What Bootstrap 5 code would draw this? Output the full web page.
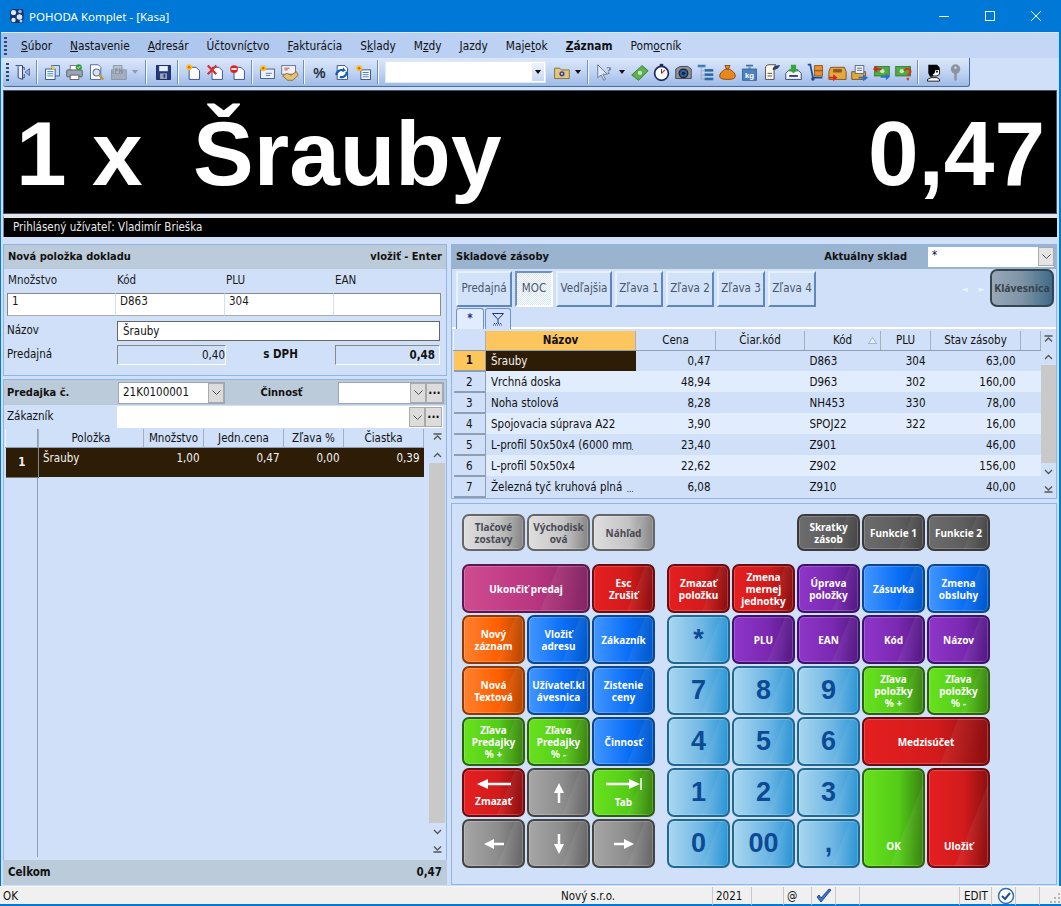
<!DOCTYPE html>
<html lang="sk">
<head>
<meta charset="UTF-8">
<title>POHODA Komplet - [Kasa]</title>
<link href="https://cdn.jsdelivr.net/npm/bootstrap@5.3.0/dist/css/bootstrap.min.css" rel="stylesheet">
<style>
body{margin:0;background:#0078d7;font:11.5px/1.2 "DejaVu Sans Condensed","Noto Sans","Liberation Sans",sans-serif;color:#111;overflow:hidden}
.app-win{width:1061px;height:906px;padding:0 2px 2px 1px;background:#0078d7}
.title-bar{height:32px;color:#fff;font:11.5px "Noto Sans",sans-serif;padding-left:8px}
.title-bar svg{display:block}
.win-btn{width:46px;height:32px}
.app-body{height:872px;background:#cfe0f8}
.menu-bar{height:26px;padding:1px 0 0 3px;font-size:11.8px;background:linear-gradient(90deg,#a5c0ea,#c4d7f6 60%);border-top:1px solid #dfe9f8}
.grip{width:3px;height:18px;background:repeating-linear-gradient(#2b4a78 0 2px,transparent 2px 4px);flex:none}
.menu-item{padding:0 9px;color:#111}
.menu-bar .grip{margin-right:5px}
.tool-row{height:30px;padding-left:2px}
.tool-bar{width:967px;height:29px;padding-left:3px;background:linear-gradient(#dbe7fb,#c4d6f4 45%,#9dbae6);border-right:1px solid #4a6c9c;border-bottom:1px solid #4a6c9c;border-radius:0 0 3px 3px}
.tool-bar .grip{margin-right:2px}
.tbtn{width:22px;height:22px;flex:none;display:flex;align-items:center;justify-content:center}
.tbtn svg{display:block;width:19px;height:19px}
.tcaret{width:0;height:0;border:3px solid transparent;border-top:4px solid #111;border-bottom:0;margin:0 3px;flex:none}
.tcaret.off{border-top-color:#8b9bb2}
.tsep{width:2px;height:24px;margin:0 3px;background:linear-gradient(90deg,#6f8fbd 50%,#f4f8ff 50%);flex:none}
.gap-l2{margin-left:2px}
.tcombo{width:161px;height:22px;background:#fff;margin-left:3px;flex:none;border:1px solid #dfe9f8}
.tcombo-btn{width:14px;height:20px;margin-left:auto;background:linear-gradient(#eef3fb,#c8d8f2);border:1px solid #fff}
.tcombo-btn .tcaret{margin:0}
.big-display{height:124px;margin:2px 2px 0;background:#000;color:#fff;border:1px solid #44536a;padding:2px 11px 0 12px;font:700 91px/1 "Liberation Sans",Arial,sans-serif;white-space:pre}
.user-bar{height:23px;margin:0 2px;padding-left:9px;background:#000;color:#e9e9e9;line-height:19px;border-left:1px solid #888;border-top:4px solid #e2e6ec}
.work-area{display:grid;grid-template-columns:444px 606px;column-gap:4px;padding:7px 0 0 2px;height:649px}
.col-left,.col-right{display:flex;flex-direction:column;height:641px}
.pane{border:1px solid #8fb4e6;background:#cfe0f8}
.pane-head{background:#bccbd9;font-weight:700;font-size:11px;padding:0 4px;color:#111}
.item-pane{height:132px;margin-bottom:3px}
.item-pane .pane-head{height:24px}
.item-grid{display:grid;grid-template-columns:109px 109px 109px 107px;margin:0 5px 0 3px;padding-top:4px;color:#1a1a1a}
.item-lbl{height:20px;padding:1px 0 0 1px}
.item-cell{height:23px;background:#fff;border-top:1px solid #888;border-bottom:1px solid #aaa;padding:1px 4px;border-right:1px solid #cfe0f8}
.item-cell.cell-first{border-left:1px solid #888}
.item-cell.cell-last{border-right:1px solid #888}
.item-row2{display:grid;grid-template-columns:110px 323px;margin:5px 0 0 3px;align-items:center}
.name-box{height:20px;background:#fff;border:1px solid #666;padding:1px 5px;line-height:16px}
.item-row3{display:grid;grid-template-columns:110px 109px 109px 105px;margin:4px 0 0 3px;align-items:center}
.ro-box{height:20px;border-top:1px solid #888;border-left:1px solid #888;border-bottom:1px solid #fff;border-right:1px solid #fff;text-align:right;line-height:18px}
.doc-pane{flex:1;display:flex;flex-direction:column}
.doc-head{height:25px;padding:0;display:grid;grid-template-columns:114px 107px 113px 106px;align-items:center}
.doc-head b{padding-left:3px}
.combo-box{height:22px;background:#fff;border:1px solid #9aa7b5;display:flex;align-items:center;padding-left:4px;font-weight:400;font-size:11.5px}
.combo-arrow{width:16px;height:20px;margin-left:auto;background:#dcdcdc;border:1px solid #aaa;flex:none;display:flex;align-items:center;justify-content:center}
.combo-dots{width:17px;height:20px;background:#dcdcdc;border:1px solid #aaa;flex:none;text-align:center;font-weight:700;line-height:12px;font-size:12px}
.cust-row{height:24px;display:grid;grid-template-columns:110px 326px;align-items:center;padding-left:3px}
.cust-row .combo-box{height:22px;border-color:#fff}
.doc-table-wrap{flex:1;display:flex;padding:0 2px 0 1px;min-height:0}
.doc-grid{flex:1;position:relative;background:#cfe0f8}
.line-v{position:absolute;left:32px;top:0;bottom:0;width:1px;background:#8d9fb5}
.tb-grid{table-layout:fixed;margin:0;border-collapse:collapse;position:relative;font-size:inherit}
.tb-doc{width:418px}
.tb-grid th,.tb-grid td{padding:0 4px;background:transparent;color:#111;border:0;white-space:nowrap;overflow:hidden;box-shadow:none}
.tb-grid th{height:18px;font-weight:400;text-align:center;border-right:1px solid #a4b0bf;border-bottom:1px solid #8d9fb5;border-left:1px solid #eef4fd;vertical-align:middle;line-height:16px}
.tb-grid .num{text-align:right}
.doc-row td{height:30px;background:#2e1d06;color:#f2f2f2;vertical-align:top;padding-top:2px;line-height:16px}
.doc-row td.rhead{font-weight:700;text-align:center;vertical-align:middle;border-right:1px solid #888;border-bottom:1px solid #777;padding:0}
.sbar{width:16px;flex:none;display:flex;flex-direction:column;background:#cfe0f8;margin-left:5px}
.sbtn{height:17px;flex:none;display:flex;align-items:center;justify-content:center}
.strack{flex:1;background:#c9c9c9}
.total-bar{height:25px;background:#bccbd9;font-weight:700;padding:0 5px;margin:3px -1px -1px}
.stock-pane{height:255px;margin-bottom:4px}
.stock-head{height:24px;background:#9ab3cf;font-weight:700;font-size:11px;padding:0 2px 0 4px}
.stock-head .combo-box{width:126px;height:20px;margin-left:21px;border:0;align-items:flex-start;padding-top:2px}
.stock-head .combo-arrow{height:19px;background:#e4e4e4;margin-top:-2px}
.price-row{height:37px;padding-left:4px;margin-top:2px}
.price-btn{height:36px;background:#d2e2f9;border:2px solid;border-color:#e7f0fd #5f86bd #5f86bd #e7f0fd;display:flex;align-items:center;justify-content:center;color:#47566b;margin-right:3px;flex:none}
.price-btn.on{background:repeating-conic-gradient(#fff 0 25%,#d7e5fa 0 50%) 0 0/2px 2px;border-color:#6f93c6 #fff #fff #6f93c6}
.w56{width:56px}.w38{width:38px}.w48{width:48px}
.kbd-toggle{width:64px;height:38px;margin:-2px 2px 0 0;border:2px solid #34464f;border-radius:7px;background:linear-gradient(90deg,#97a8b8,#7f94a6 50%,#3f6b88);color:#38424c;font:700 10.5px "Noto Sans",sans-serif;display:flex;align-items:center;justify-content:center;flex:none}
.pager-mark{color:#e9f1fd;font-size:9px;width:17px;text-align:center;flex:none}
.mini-tabs{height:21px;padding-left:4px;border-bottom:2px solid #fff}
.mini-tab{width:28px;height:21px;border:1px solid #6f93c6;border-bottom:0;border-radius:3px 3px 0 0;background:#e1ecfc;display:flex;align-items:center;justify-content:center;color:#1e2f86;font-weight:700}
.mini-tab.alt{width:26px;background:#cfe0f8;margin-left:1px}
.stock-wrap{display:flex;padding:2px 2px 0 1px}
.stock-tb{width:587px;flex:none;align-self:flex-start}
.stock-tb td{height:21px;line-height:18px;padding:0 5px;vertical-align:middle}
.stock-tb tr:nth-child(even) td{background:#e1ecfc}
.stock-tb tr:nth-child(odd) td{background:#cfe0f8}
.stock-tb td.rhead{background:#cfe0f8!important;text-align:center;border-right:1px solid #8d9fb5;border-bottom:2px solid #8d9fb5;padding:0}
.stock-tb tr td.sel-head{background:#ffc65c!important;font-weight:700}
.stock-tb tr td.sel-name{background:#2e1d06!important;color:#f2f2f2}
.stock-tb th{height:19px}
.stock-tb th.sel-col{background:#fdc55e;font-weight:700}
.stock-tb th.sort-col{position:relative}
.sort-mark{position:absolute;right:3px;top:6px;display:block}
.dots-cut{position:relative}
.dots-cut::after{content:"...";position:absolute;right:2px;bottom:3px;font-size:8px;line-height:8px;color:#111}
.stock-wrap .sbar{height:166px;margin-left:0;width:15px}
.c32{width:32px}.c33{width:33px}.c105{width:105px}.c60{width:60px}.c80{width:80px}.c150{width:150px}.c89{width:89px}.c76{width:76px}.c50{width:50px}.c90{width:90px}.c20{width:20px}
.pad-pane{flex:1;padding:10px 0 0 10px}
.pad-grid{display:grid;grid-template-columns:repeat(3,63px) 8px repeat(5,63px);grid-template-rows:37px 9px repeat(6,49px);gap:2px;width:530px}
.pad{display:flex;flex-direction:column;align-items:center;justify-content:center;text-align:center;border:2px solid var(--b);border-radius:7px;color:#fff;font:700 10px/12px "Noto Sans","Liberation Sans",sans-serif;overflow:hidden;box-shadow:inset 0 0 0 1px rgba(255,255,255,.2);background:linear-gradient(112deg,transparent 66%,rgba(255,255,255,.06) 66.5%,transparent 90%),linear-gradient(90deg,var(--c1),var(--c2) 58%,var(--c3))}
.pad svg{display:block}
.k-silver{--b:#666;--c1:#dedede;--c2:#c4c4c4;--c3:#858585;color:#4a4a55}
.k-dark{--b:#3a3a3a;--c1:#6c6c6c;--c2:#5e5e5e;--c3:#474747}
.k-pink{--b:#5b1850;--c1:#cf4c92;--c2:#b8357f;--c3:#842664}
.k-red{--b:#6c0c10;--c1:#e51f20;--c2:#d31b1c;--c3:#8d0f10}
.k-blue{--b:#0b468e;--c1:#4297ff;--c2:#0a6ef7;--c3:#0059cb}
.k-orange{--b:#8c3a02;--c1:#ff812f;--c2:#ff5f00;--c3:#b64600}
.k-green{--b:#2d6010;--c1:#67e21d;--c2:#54cc18;--c3:#3b8410}
.k-gray{--b:#444;--c1:#a6a6a6;--c2:#8c8c8c;--c3:#676767}
.k-purple{--b:#3c1170;--c1:#8f36c9;--c2:#7a28b1;--c3:#551a84}
.k-sky{--b:#1f6892;--c1:#a8d6ef;--c2:#6db6e4;--c3:#2a95d5;color:#0c4a94;font:700 27px/1 "Liberation Sans",Arial,sans-serif}
.k-ok{justify-content:flex-end;padding-bottom:14px}
.k-arrow{gap:6px}
.pad-wide2{grid-column:span 2}
.pad-tall2{grid-row:span 2}
.status-bar{height:18px;background:#f0f0f0;display:grid;grid-template-columns:558px 155px 39px 32px 28px 24px 24px 100px 32px 24px 24px 21px;border-top:1px solid #f8f8f8;margin:0 -2px 0 -1px}
.status-bar>div{border-right:1px solid #c8c8c8;padding:0 3px;line-height:17px;white-space:nowrap;display:flex;align-items:center}
.status-bar>div.no-sep{border:0}
.status-bar>div.cell-c{justify-content:center;padding:0}
.status-bar>div:last-child{border:0;padding:0;justify-content:flex-end}
</style>
</head>
<body>
<div class="app-win d-flex flex-column">
  <div class="title-bar d-flex align-items-center">
    <svg width="16" height="16" viewBox="0 0 16 16" class="me-1"><path d="M1 3l3-2h10l1 5-1 9H3L1 12z" fill="#16356f"/><circle cx="4.500" cy="4.500" r="2.600" fill="#dce9fb"/><circle cx="11" cy="3.500" r="1.800" fill="#8fb7ee"/><circle cx="10.500" cy="9" r="2.800" fill="#dce9fb"/><circle cx="4.500" cy="12" r="2.200" fill="#dce9fb"/><circle cx="12" cy="13" r="1.500" fill="#b6d0f3"/></svg>
    <span>POHODA Komplet - [Kasa]</span>
    <div class="ms-auto d-flex">
      <div class="win-btn d-flex align-items-center justify-content-center"><svg width="10" height="10" viewBox="0 0 10 10"><path d="M0 5.500h10" stroke="#fff" fill="none"/></svg></div>
      <div class="win-btn d-flex align-items-center justify-content-center"><svg width="10" height="10" viewBox="0 0 10 10"><rect x=".5" y=".5" width="9" height="9" stroke="#fff" fill="none"/></svg></div>
      <div class="win-btn d-flex align-items-center justify-content-center"><svg width="10" height="10" viewBox="0 0 10 10"><path d="M0 0l10 10M10 0L0 10" stroke="#fff" fill="none"/></svg></div>
    </div>
  </div>
  <div class="app-body d-flex flex-column">
    <div class="menu-bar d-flex align-items-center">
      <div class="grip"></div>
      <span class="menu-item"><u>S</u>úbor</span><span class="menu-item"><u>N</u>astavenie</span><span class="menu-item"><u>A</u>dresár</span><span class="menu-item">Účtovní<u>c</u>tvo</span><span class="menu-item"><u>F</u>akturácia</span><span class="menu-item">S<u>k</u>lady</span><span class="menu-item">M<u>z</u>dy</span><span class="menu-item"><u>J</u>azdy</span><span class="menu-item">Maje<u>t</u>ok</span><span class="menu-item fw-bold"><u>Z</u>áznam</span><span class="menu-item">Pom<u>o</u>cník</span>
    </div>
    <div class="tool-row">
      <div class="tool-bar d-flex align-items-center">
        <div class="grip"></div>
        <!-- door -->
        <div class="tbtn"><svg viewBox="0 0 22 22"><path d="M3 3h8v16l-5-2V4M11 5h2v3M11 17h2v-4" fill="#e7eefb" stroke="#17306e"/><path d="M14 10.500l5-4v8z" fill="#9fb6dc" stroke="#17306e" stroke-width=".7"/></svg></div>
        <div class="tsep"></div>
        <!-- docs -->
        <div class="tbtn"><svg viewBox="0 0 22 22"><rect x="10" y="3" width="9" height="12" fill="#c9d9f3" stroke="#2b5f9e"/><rect x="3" y="7" width="11" height="12" fill="#fff" stroke="#1f4a86"/><path d="M5 10h7M5 12.500h7M5 15h7" stroke="#2b6fb5"/><path d="M9 5l2-2 3 3-2 2z" fill="#f4c930"/></svg></div>
        <!-- printer -->
        <div class="tbtn"><svg viewBox="0 0 22 22"><rect x="6" y="3" width="10" height="6" fill="#fff" stroke="#666"/><rect x="2" y="8" width="18" height="8" rx="1" fill="#9aa6b8" stroke="#555"/><rect x="6" y="14" width="10" height="5" fill="#fff" stroke="#555"/><circle cx="16" cy="5" r="3.500" fill="#2f9c3d"/><path d="M14.500 5l1 1.200 2-2.400" stroke="#fff" fill="none"/></svg></div>
        <!-- preview -->
        <div class="tbtn"><svg viewBox="0 0 22 22"><path d="M4 2h9l3 3v14H4z" fill="#fff" stroke="#3c5c8e"/><circle cx="11" cy="11" r="4" fill="#d4e4f8" stroke="#66758c" stroke-width="1.200"/><path d="M14 14l5 5" stroke="#c9962c" stroke-width="2.500"/></svg></div>
        <!-- fax off -->
        <div class="tbtn"><svg viewBox="0 0 22 22"><rect x="3" y="8" width="17" height="11" fill="#a3adbd" stroke="#8a94a4"/><rect x="5" y="3" width="10" height="9" fill="#b7c1d0" stroke="#8a94a4"/><text x="6.500" y="11" font-size="7" font-weight="700" fill="#7e8898">FN</text></svg></div>
        <div class="tcaret off"></div>
        <div class="tsep ms-1"></div>
        <!-- save -->
        <div class="tbtn gap-l2"><svg viewBox="0 0 22 22"><rect x="3" y="3" width="16" height="16" fill="#23397e" stroke="#131f50"/><rect x="6" y="3.500" width="10" height="6" fill="#e8eefa"/><rect x="7" y="12" width="8" height="6.500" fill="#9aa4b8"/><rect x="11" y="13" width="2" height="4" fill="#23397e"/></svg></div>
        <div class="tsep"></div>
        <!-- new -->
        <div class="tbtn"><svg viewBox="0 0 22 22"><path d="M6 5h8l4 4v10H6z" fill="#fff" stroke="#26407a"/><circle cx="6" cy="5" r="3.500" fill="#f6c22a"/><circle cx="6" cy="5" r="1.500" fill="#e8631a"/></svg></div>
        <!-- delete -->
        <div class="tbtn"><svg viewBox="0 0 22 22"><path d="M7 5h8l4 4v10H7z" fill="#fff" stroke="#26407a"/><path d="M2 3l10 10M12 3L2 13" stroke="#e02a2a" stroke-width="2.500"/></svg></div>
        <!-- stop -->
        <div class="tbtn"><svg viewBox="0 0 22 22"><path d="M7 5h8l4 4v10H7z" fill="#fff" stroke="#26407a"/><circle cx="7" cy="7" r="4.500" fill="#d8261f"/><rect x="4" y="6" width="6" height="2" fill="#fff"/></svg></div>
        <div class="tsep"></div>
        <!-- new mail -->
        <div class="tbtn"><svg viewBox="0 0 22 22"><rect x="3" y="7" width="16" height="11" fill="#eef0f4" stroke="#39517c"/><path d="M9 12h7M9 14.500h5" stroke="#3b6fc4"/><circle cx="6" cy="6" r="3.500" fill="#f6c22a"/><circle cx="6" cy="6" r="1.500" fill="#e8631a"/></svg></div>
        <!-- handshake -->
        <div class="tbtn"><svg viewBox="0 0 22 22"><rect x="2" y="3" width="16" height="10" fill="#eef0f4" stroke="#5b6c86"/><path d="M5 6h6M5 8h4" stroke="#b6403d"/><path d="M3 15l5-3 5 2 6-4 2 4-6 6H9z" fill="#e3c178" stroke="#8f6a22"/></svg></div>
        <div class="tsep"></div>
        <div class="tbtn"><svg viewBox="0 0 22 22"><text x="11" y="17" text-anchor="middle" font-size="16" font-weight="700" font-family="Liberation Sans" fill="#242c38">%</text></svg></div>
        <!-- refresh -->
        <div class="tbtn"><svg viewBox="0 0 22 22"><path d="M6 3h9l3 3v13H6z" fill="#fff" stroke="#26407a"/><path d="M5 14a6 6 0 0 1 9-5" stroke="#0d5cc0" stroke-width="2.500" fill="none"/><path d="M17 10a6 6 0 0 1-8 6" stroke="#0d5cc0" stroke-width="2.500" fill="none"/><path d="M13 5l3 4-4 1z" fill="#0d5cc0"/></svg></div>
        <!-- new list -->
        <div class="tbtn"><svg viewBox="0 0 22 22"><rect x="8" y="8" width="11" height="11" fill="#fff" stroke="#26407a"/><path d="M10 11h7M10 13.500h7M10 16h7" stroke="#2b6fb5"/><circle cx="6" cy="6" r="3.500" fill="#f6c22a"/><circle cx="6" cy="6" r="1.500" fill="#e8631a"/></svg></div>
        <div class="tsep"></div>
        <div class="tcombo d-flex"><div class="tcombo-btn d-flex align-items-center justify-content-center"><div class="tcaret"></div></div></div>
        <!-- folder -->
        <div class="tbtn ms-1"><svg viewBox="0 0 22 22"><path d="M3 6h6l2 2h9v10H3z" fill="#e2c67a" stroke="#7d6a2c"/><circle cx="11.500" cy="12.500" r="3" fill="#3d3ab0"/><circle cx="11.500" cy="12.500" r="1.200" fill="#f6e36a"/></svg></div>
        <div class="tcaret"></div>
        <div class="tsep"></div>
        <!-- help -->
        <div class="tbtn gap-l2"><svg viewBox="0 0 22 22"><path d="M2 2v15l4-3 3 6 2-1-3-6h5z" fill="#dfe8f6" stroke="#5f6f88"/><text x="15" y="13" text-anchor="middle" font-size="12" font-weight="700" font-family="Liberation Serif" fill="#5f6f88">?</text></svg></div>
        <div class="tcaret"></div>
        <!-- money -->
        <div class="tbtn"><svg viewBox="0 0 22 22"><path d="M2 14L14 3l7 6-11 11z" fill="#5fb04e" stroke="#2e7a2c"/><circle cx="11.500" cy="11.500" r="2.500" fill="#c4ecb6"/></svg></div>
        <!-- timer -->
        <div class="tbtn"><svg viewBox="0 0 22 22"><rect x="9" y="1" width="4" height="3" fill="#1c2a5c"/><circle cx="11" cy="12" r="8" fill="#fff" stroke="#1c2a5c" stroke-width="2"/><path d="M11 12l4-4" stroke="#d9302a" stroke-width="1.500"/><path d="M11 12V7" stroke="#1c2a5c"/></svg></div>
        <!-- camera -->
        <div class="tbtn"><svg viewBox="0 0 22 22"><path d="M2 7l5-3h9l4 3v11H2z" fill="#8c919a" stroke="#3c4048"/><circle cx="11" cy="12" r="5" fill="#2d5ea8" stroke="#23262c" stroke-width="1.500"/><circle cx="11" cy="12" r="2" fill="#11233f"/></svg></div>
        <!-- tree -->
        <div class="tbtn"><svg viewBox="0 0 22 22"><rect x="2" y="2" width="9" height="3" fill="#3f7eb8"/><path d="M6 5v14M6 9h4M6 14h4M6 18.500h4" stroke="#9aa8bb"/><rect x="10" y="7" width="10" height="3" fill="#2f6aa5"/><rect x="10" y="12" width="10" height="3" fill="#2f6aa5"/><rect x="10" y="17" width="10" height="3" fill="#2f6aa5"/></svg></div>
        <!-- bag -->
        <div class="tbtn"><svg viewBox="0 0 22 22"><path d="M8 3h6l-2 4h-2z" fill="#e89a28" stroke="#7a3d06"/><path d="M9 7h4c4 2 7 5 7 8 0 3-3 4-9 4s-9-1-9-4c0-3 3-6 7-8z" fill="#e8871e" stroke="#7a3d06"/></svg></div>
        <!-- kg -->
        <div class="tbtn"><svg viewBox="0 0 22 22"><rect x="7" y="2" width="8" height="2" fill="#3a6ea8"/><rect x="9.500" y="4" width="3" height="3" fill="#7ba3cf"/><rect x="3" y="7" width="16" height="13" fill="#4f82ba" stroke="#2d5d96"/><text x="11" y="17" text-anchor="middle" font-size="9" font-weight="700" font-family="Liberation Sans" fill="#fff">kg</text></svg></div>
        <!-- paper -->
        <div class="tbtn"><svg viewBox="0 0 22 22"><path d="M4 6c0-3 2-4 4-4h8c-2 1-2 3-2 5v12H4z" fill="#fbf7e4" stroke="#3a3f4e"/><path d="M6.500 12h5M6.500 15h5" stroke="#3a3f4e"/><path d="M12 7c2-3 5-5 9-4-2 3-4 5-8 5z" fill="#2c3e66"/></svg></div>
        <!-- inbox -->
        <div class="tbtn"><svg viewBox="0 0 22 22"><path d="M2 12l3-3h12l3 3v7H2z" fill="#f2f4f8" stroke="#25355f"/><rect x="6" y="14" width="10" height="2" fill="#25355f"/><path d="M8 2h6v5h3l-6 5-6-5h3z" fill="#38a53c"/></svg></div>
        <!-- cart -->
        <div class="tbtn"><svg viewBox="0 0 22 22"><path d="M2 2h3l3 15h11" stroke="#1e4a8e" stroke-width="2" fill="none"/><circle cx="8" cy="18.500" r="2" fill="#1e4a8e"/><rect x="10" y="3" width="9" height="6" fill="#e9902e" stroke="#8a5210"/><rect x="10" y="9" width="9" height="6" fill="#e9902e" stroke="#8a5210"/></svg></div>
        <!-- box in -->
        <div class="tbtn"><svg viewBox="0 0 22 22"><path d="M3 5h16l2 5v9H1v-9z" fill="#e4a83e" stroke="#7b4c10"/><rect x="6" y="7" width="10" height="4" fill="#8a5a18"/><path d="M1 16h5v-3l5 4-5 4v-3H1z" fill="#d8261f"/></svg></div>
        <!-- box out -->
        <div class="tbtn"><svg viewBox="0 0 22 22"><path d="M2 10h16v9H2z" fill="#e4a83e" stroke="#7b4c10"/><rect x="6" y="3" width="10" height="9" fill="#f2f4f8" stroke="#4a5e80"/><path d="M8 6h6M8 8.500h6" stroke="#4a5e80"/><path d="M10 16h5v-3l6 4-6 4v-3h-5z" fill="#2a6fd0"/></svg></div>
        <!-- money arrows -->
        <div class="tbtn"><svg viewBox="0 0 22 22"><rect x="3" y="4" width="17" height="11" fill="#55a848" stroke="#2e7a2c"/><circle cx="12" cy="9.500" r="2.500" fill="#c4ecb6"/><path d="M11 6H6V3L1 7l5 4V8h5z" fill="#d8261f"/><path d="M10 15h6v-3l5 4-5 4v-3h-6z" fill="#2a6fd0"/></svg></div>
        <!-- money question -->
        <div class="tbtn"><svg viewBox="0 0 22 22"><rect x="2" y="4" width="17" height="11" fill="#55a848" stroke="#2e7a2c"/><circle cx="9" cy="9.500" r="2.500" fill="#c4ecb6"/><path d="M12 9c1-3 7-3 7 1 0 3-3 3-3 5M16 17v3" stroke="#d0391a" stroke-width="2.500" fill="none"/></svg></div>
        <div class="tsep"></div>
        <!-- head -->
        <div class="tbtn"><svg viewBox="0 0 22 22"><path d="M13 7h5v6l-3 2h-5v-3l2-1z" fill="#fff" stroke="#000"/><path d="M5 2h10l3 3v3h-5l-1 4-2 1v3H7l-2-4z" fill="#000"/><rect x="14" y="9" width="2" height="2" fill="#000"/><path d="M4 21v-2l4-2h7l3 2v2z" fill="#fff" stroke="#000"/></svg></div>
        <!-- key -->
        <div class="tbtn"><svg viewBox="0 0 22 22"><circle cx="11" cy="7" r="5.500" fill="#8f959d"/><circle cx="11" cy="5.500" r="1.500" fill="#c3d3ec"/><path d="M9.500 11h3v8l-1.500 2-1.500-2z" fill="#8f959d"/></svg></div>
      </div>
    </div>

    <div class="big-display d-flex justify-content-between align-items-center"><span>1 x  Šrauby</span><span>0,47</span></div>
    <div class="user-bar">Prihlásený užívateľ: Vladimír Brieška</div>

    <div class="work-area">
      <div class="col-left">
        <div class="pane item-pane">
          <div class="pane-head d-flex justify-content-between align-items-center"><span>Nová položka dokladu</span><span>vložiť - Enter</span></div>
          <div class="item-grid">
            <div class="item-lbl">Množstvo</div><div class="item-lbl">Kód</div><div class="item-lbl">PLU</div><div class="item-lbl">EAN</div>
            <div class="item-cell cell-first">1</div><div class="item-cell">D863</div><div class="item-cell">304</div><div class="item-cell cell-last"></div>
          </div>
          <div class="item-row2"><span>Názov</span><div class="name-box">Šrauby</div></div>
          <div class="item-row3"><span>Predajná</span><div class="ro-box">0,40</div><div class="text-center fw-bold">s DPH</div><div class="ro-box fw-bold pe-1">0,48</div></div>
        </div>
        <div class="pane doc-pane">
          <div class="pane-head doc-head">
            <b>Predajka č.</b>
            <div class="combo-box">21K0100001<div class="combo-arrow"><svg width="9" height="5" viewBox="0 0 9 5"><path d="M.5.500l4 4 4-4" stroke="#555" fill="none"/></svg></div></div>
            <div class="text-center fw-bold">Činnosť</div>
            <div class="combo-box"><div class="combo-arrow"><svg width="9" height="5" viewBox="0 0 9 5"><path d="M.5.500l4 4 4-4" stroke="#555" fill="none"/></svg></div><div class="combo-dots">...</div></div>
          </div>
          <div class="cust-row"><span>Zákazník</span><div class="combo-box"><div class="combo-arrow"><svg width="9" height="5" viewBox="0 0 9 5"><path d="M.5.500l4 4 4-4" stroke="#555" fill="none"/></svg></div><div class="combo-dots">...</div></div></div>
          <div class="doc-table-wrap">
            <div class="doc-grid">
              <div class="line-v"></div>
              <table class="table tb-grid tb-doc">
                <colgroup><col class="c33"><col class="c105"><col class="c60"><col class="c80"><col class="c60"><col class="c80"></colgroup>
                <thead><tr><th></th><th>Položka</th><th>Množstvo</th><th>Jedn.cena</th><th>Zľava %</th><th>Čiastka</th></tr></thead>
                <tbody><tr class="doc-row"><td class="rhead">1</td><td>Šrauby</td><td class="num">1,00</td><td class="num">0,47</td><td class="num">0,00</td><td class="num">0,39</td></tr></tbody>
              </table>
            </div>
            <div class="sbar" id="docScroll"></div>
          </div>
          <div class="total-bar d-flex justify-content-between align-items-center"><span>Celkom</span><span>0,47</span></div>
        </div>
      </div>

      <div class="col-right">
        <div class="pane stock-pane">
          <div class="stock-head d-flex align-items-center"><span>Skladové zásoby</span><span class="ms-auto">Aktuálny sklad</span><div class="combo-box">*<div class="combo-arrow"><svg width="9" height="5" viewBox="0 0 9 5"><path d="M.5.500l4 4 4-4" stroke="#555" fill="none"/></svg></div></div></div>
          <div class="price-row d-flex">
            <div class="price-btn w56">Predajná</div><div class="price-btn on w38">MOC</div><div class="price-btn w56">Vedľajšia</div><div class="price-btn w48">Zľava 1</div><div class="price-btn w48">Zľava 2</div><div class="price-btn w48">Zľava 3</div><div class="price-btn w48">Zľava 4</div>
            <span class="pager-mark ms-auto align-self-center">◄</span><span class="pager-mark align-self-center">►</span>
            <div class="kbd-toggle">Klávesnica</div>
          </div>
          <div class="mini-tabs d-flex">
            <div class="mini-tab">*</div>
            <div class="mini-tab alt"><svg width="14" height="14" viewBox="0 0 14 14"><path d="M1.500 1.500h11L7 7.500zM7 7.500V11" stroke="#1e2f86" fill="none"/><path d="M2 13h10M3 11.500h8" stroke="#1e2f86" stroke-dasharray="1 1"/></svg></div>
          </div>
          <div class="stock-wrap">
            <table class="table tb-grid stock-tb">
              <colgroup><col class="c32"><col class="c150"><col class="c80"><col class="c89"><col class="c76"><col class="c50"><col class="c90"><col class="c20"></colgroup>
              <thead><tr><th></th><th class="sel-col">Názov</th><th>Cena</th><th>Čiar.kód</th><th class="sort-col">Kód<svg class="sort-mark" width="9" height="7" viewBox="0 0 9 7"><path d="M.5 6.500h8L4.500.5z" fill="#e6eefb" stroke="#8d9fb5" stroke-width=".7"/></svg></th><th>PLU</th><th>Stav zásoby</th><th></th></tr></thead>
              <tbody id="stockRows"></tbody>
            </table>
            <div class="sbar" id="stockScroll"></div>
          </div>
        </div>
        <div class="pane pad-pane">
          <div class="pad-grid">
            <div class="pad k-silver">Tlačové<br>zostavy</div><div class="pad k-silver">Východisk<br>ová</div><div class="pad k-silver">Náhľad</div><div></div><div></div><div></div><div class="pad k-dark">Skratky<br>zásob</div><div class="pad k-dark">Funkcie 1</div><div class="pad k-dark">Funkcie 2</div>
            <div></div><div></div><div></div><div></div><div></div><div></div><div></div><div></div><div></div>
            <div class="pad k-pink pad-wide2">Ukončiť predaj</div><div class="pad k-red">Esc<br>Zrušiť</div><div></div><div class="pad k-red">Zmazať<br>položku</div><div class="pad k-red">Zmena<br>mernej<br>jednotky</div><div class="pad k-purple">Úprava<br>položky</div><div class="pad k-blue">Zásuvka</div><div class="pad k-blue">Zmena<br>obsluhy</div>
            <div class="pad k-orange">Nový<br>záznam</div><div class="pad k-blue">Vložiť<br>adresu</div><div class="pad k-blue">Zákazník</div><div></div><div class="pad k-sky">*</div><div class="pad k-purple">PLU</div><div class="pad k-purple">EAN</div><div class="pad k-purple">Kód</div><div class="pad k-purple">Názov</div>
            <div class="pad k-orange">Nová<br>Textová</div><div class="pad k-blue">Užívateľ.kl<br>ávesnica</div><div class="pad k-blue">Zistenie<br>ceny</div><div></div><div class="pad k-sky">7</div><div class="pad k-sky">8</div><div class="pad k-sky">9</div><div class="pad k-green">Zľava<br>položky<br>% +</div><div class="pad k-green">Zľava<br>položky<br>% -</div>
            <div class="pad k-green">Zľava<br>Predajky<br>% +</div><div class="pad k-green">Zľava<br>Predajky<br>% -</div><div class="pad k-blue">Činnosť</div><div></div><div class="pad k-sky">4</div><div class="pad k-sky">5</div><div class="pad k-sky">6</div><div class="pad k-red pad-wide2">Medzisúčet</div>
            <div class="pad k-red k-arrow"><svg width="34" height="10" viewBox="0 0 34 10"><path d="M34 5H9" stroke="#fff" stroke-width="2.500"/><path d="M0 5l11-5v10z" fill="#fff"/></svg>Zmazať</div>
            <div class="pad k-gray"><svg width="10" height="20" viewBox="0 0 10 20"><path d="M5 20V8" stroke="#fff" stroke-width="2.500"/><path d="M5 0l5 10H0z" fill="#fff"/></svg></div>
            <div class="pad k-green k-arrow"><svg width="36" height="12" viewBox="0 0 36 12"><path d="M0 6h26" stroke="#fff" stroke-width="2.500"/><path d="M35 0v12" stroke="#fff" stroke-width="1.500"/><path d="M34 6l-11-5v10z" fill="#fff"/></svg>Tab</div>
            <div></div><div class="pad k-sky">1</div><div class="pad k-sky">2</div><div class="pad k-sky">3</div>
            <div class="pad k-green pad-tall2 k-ok">OK</div><div class="pad k-red pad-tall2 k-ok">Uložiť</div>
            <div class="pad k-gray"><svg width="20" height="10" viewBox="0 0 20 10"><path d="M20 5H8" stroke="#fff" stroke-width="2.500"/><path d="M0 5l10-5v10z" fill="#fff"/></svg></div>
            <div class="pad k-gray"><svg width="10" height="20" viewBox="0 0 10 20"><path d="M5 0v12" stroke="#fff" stroke-width="2.500"/><path d="M5 20L0 10h10z" fill="#fff"/></svg></div>
            <div class="pad k-gray"><svg width="20" height="10" viewBox="0 0 20 10"><path d="M0 5h12" stroke="#fff" stroke-width="2.500"/><path d="M20 5L10 0v10z" fill="#fff"/></svg></div>
            <div></div><div class="pad k-sky">0</div><div class="pad k-sky">00</div><div class="pad k-sky">,</div>
          </div>
        </div>
      </div>
    </div>

    <div class="status-bar">
      <div class="no-sep">OK</div><div>Nový s.r.o.</div><div>2021</div><div></div><div>@</div>
      <div class="cell-c"><svg width="18" height="16" viewBox="0 0 18 16"><path d="M2 9l4 5 10-12-2-1-8 9-2-3z" fill="#2f7fd6" stroke="#101a40" stroke-width=".7"/></svg></div>
      <div></div><div></div><div class="ps-1">EDIT</div>
      <div class="cell-c ps-1"><svg width="18" height="18" viewBox="0 0 18 18"><circle cx="9" cy="9" r="7.500" fill="#fff" stroke="#2f6fb0" stroke-width="1.500"/><path d="M5 9l3 3 5-6" stroke="#1a4f94" stroke-width="2" fill="none"/></svg></div>
      <div></div>
      <div><svg width="14" height="16" viewBox="0 0 14 16"><path d="M11 5h2v2h-2zM7 9h2v2H7zM11 9h2v2h-2zM3 13h2v2H3zM7 13h2v2H7zM11 13h2v2h-2z" fill="#b5b5b5"/></svg></div>
    </div>
  </div>
</div>

<script>
  const stock = [
    ['Šrauby','0,47','','D863','304','63,00'],
    ['Vrchná doska','48,94','','D963','302','160,00'],
    ['Noha stolová','8,28','','NH453','330','78,00'],
    ['Spojovacia súprava A22','3,90','','SPOJ22','322','16,00'],
    ['L-profil 50x50x4 (6000 mm','23,40','','Z901','','46,00'],
    ['L-profil 50x50x4','22,62','','Z902','','156,00'],
    ['Železná tyč kruhová plná','6,08','','Z910','','40,00']
  ];
  document.getElementById('stockRows').innerHTML = stock.map((r, i) => {
    const cut = (i === 4 || i === 6) ? 'dots-cut' : '';
    return `<tr>
      <td class="rhead ${i === 0 ? 'sel-head' : ''}">${i + 1}</td>
      <td class="${i === 0 ? 'sel-name' : ''} ${cut}">${r[0]}</td>
      <td class="num">${r[1]}</td><td>${r[2]}</td><td>${r[3]}</td>
      <td class="num">${r[4]}</td><td class="num">${r[5]}</td>
      <td></td></tr>`;
  }).join('');

  // same scrollbar for both grids
  const scrollBar = `
    <div class="sbtn"><svg width="9" height="9" viewBox="0 0 9 9"><path d="M.5 1h8M1 6.500l3.500-3.500 3.500 3.500" stroke="#555" stroke-width="1.300" fill="none"/></svg></div>
    <div class="sbtn"><svg width="9" height="6" viewBox="0 0 9 6"><path d="M1 5l3.500-3.500L8 5" stroke="#555" stroke-width="1.300" fill="none"/></svg></div>
    <div class="strack"></div>
    <div class="sbtn"><svg width="9" height="6" viewBox="0 0 9 6"><path d="M1 1l3.500 3.500L8 1" stroke="#555" stroke-width="1.300" fill="none"/></svg></div>
    <div class="sbtn"><svg width="9" height="9" viewBox="0 0 9 9"><path d="M.5 8h8M1 2.500L4.500 6 8 2.500" stroke="#555" stroke-width="1.300" fill="none"/></svg></div>`;
  document.getElementById('docScroll').innerHTML = scrollBar;
  document.getElementById('stockScroll').innerHTML = scrollBar;
</script>
<script src="https://cdn.jsdelivr.net/npm/bootstrap@5.3.0/dist/js/bootstrap.bundle.min.js"></script>
</body>
</html>
